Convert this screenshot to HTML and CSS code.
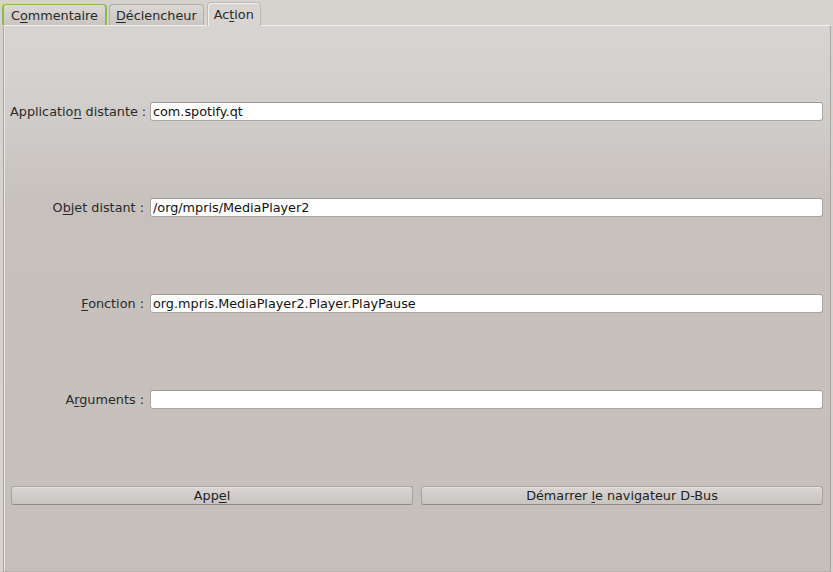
FILE: index.html
```html
<!DOCTYPE html>
<html>
<head>
<meta charset="utf-8">
<link rel="stylesheet" href="styles.css">
</head>
<body>
<div class="window">
  <div class="tabbar">
    <div class="tab tab-hover">C<u>o</u>mmentaire</div>
    <div class="tab"><u>D</u>éclencheur</div>
    <div class="tab tab-active">Ac<u>t</u>ion</div>
  </div>
  <div class="pane">
    <div class="form">
      <div class="row">
        <label class="label">Applicatio<u>n</u> distante :</label>
        <div class="input">com.spotify.qt</div>
      </div>
      <div class="row">
        <label class="label">O<u>b</u>jet distant :</label>
        <div class="input">/org/mpris/MediaPlayer2</div>
      </div>
      <div class="row">
        <label class="label"><u>F</u>onction :</label>
        <div class="input">org.mpris.MediaPlayer2.Player.PlayPause</div>
      </div>
      <div class="row">
        <label class="label">A<u>r</u>guments :</label>
        <div class="input"></div>
      </div>
    </div>
    <div class="buttons">
      <div class="button">App<u>e</u>l</div>
      <div class="button">Démarrer <u>l</u>e navigateur D-Bus</div>
    </div>
  </div>
</div>
</body>
</html>
```

FILE: styles.css
```css
html, body {
  margin: 0;
  padding: 0;
}
body {
  width: 833px;
  height: 572px;
  overflow: hidden;
  background: #d6d2ce;
  font-family: "DejaVu Sans", sans-serif;
  font-size: 12.8px;
  color: #222;
}
u {
  text-decoration: underline;
  text-underline-offset: 2px;
}
.window {
  display: flex;
  flex-direction: column;
  height: 572px;
  padding: 0 2px 0 3px;
  box-sizing: border-box;
}
.tabbar {
  display: flex;
  align-items: flex-end;
  height: 26px;
  margin-left: -1px;
  position: relative;
  z-index: 2;
}
.tab {
  box-sizing: border-box;
  height: 21px;
  padding: 0 6px;
  margin-right: 2px;
  line-height: 21px;
  border: 1px solid #b3aeaa;
  border-bottom: none;
  border-radius: 4px 4px 0 0;
  background: linear-gradient(#dcd8d5, #c9c5c1);
  color: #2a2a2a;
  margin-bottom: 1px;
}
.tab-hover {
  border-color: #8cbd4a;
  border-width: 1px 2px 0 2px;
  padding: 0 7px;
}
.tab-active {
  height: 24px;
  margin-left: 1px;
  margin-bottom: 0;
  background: #d8d4d1;
  border-color: #bfbab6;
  box-shadow: inset 1px 1px 0 #f2f0ee;
  line-height: 23px;
}
.pane {
  flex: 1;
  border: 1px solid #b9b4b0;
  border-top-color: #f2f0ee;
  border-left-color: #a9a4a0;
  border-right-color: #aaa5a1;
  border-radius: 0 3px 0 0;
  box-shadow: inset 1px 0 0 #e9e6e3;
  background: linear-gradient(#d8d4d1 0px, #d4d0cd 60px, #c6c1bd 180px, #c5c0bc 100%);
  margin-top: -1px;
  padding: 76px 7px 0 6px;
  display: flex;
  flex-direction: column;
}
.form {
  display: flex;
  flex-direction: column;
  gap: 77px;
}
.row {
  display: flex;
  align-items: center;
  height: 19px;
}
.label {
  box-sizing: border-box;
  width: 140px;
  flex: none;
  text-align: right;
  padding-right: 6px;
  color: #2a2a2a;
  white-space: nowrap;
}
.input {
  flex: 1;
  box-sizing: border-box;
  height: 19px;
  background: #fff;
  border: 1px solid #aaa6a2;
  border-top-color: #9e9995;
  border-radius: 3px;
  padding: 0 2px;
  line-height: 17px;
  color: #111;
}
.buttons {
  display: flex;
  gap: 8px;
  margin-top: 77px;
  padding-left: 1px;
}
.button {
  flex: 1;
  box-sizing: border-box;
  height: 19px;
  border: 1px solid #a8a39f;
  border-bottom-color: #8f8a86;
  border-radius: 3px;
  background: linear-gradient(#d9d6d3, #c8c4c0);
  box-shadow: inset 0 1px 0 #e6e3e0;
  text-align: center;
  line-height: 17px;
  color: #222;
}
```
